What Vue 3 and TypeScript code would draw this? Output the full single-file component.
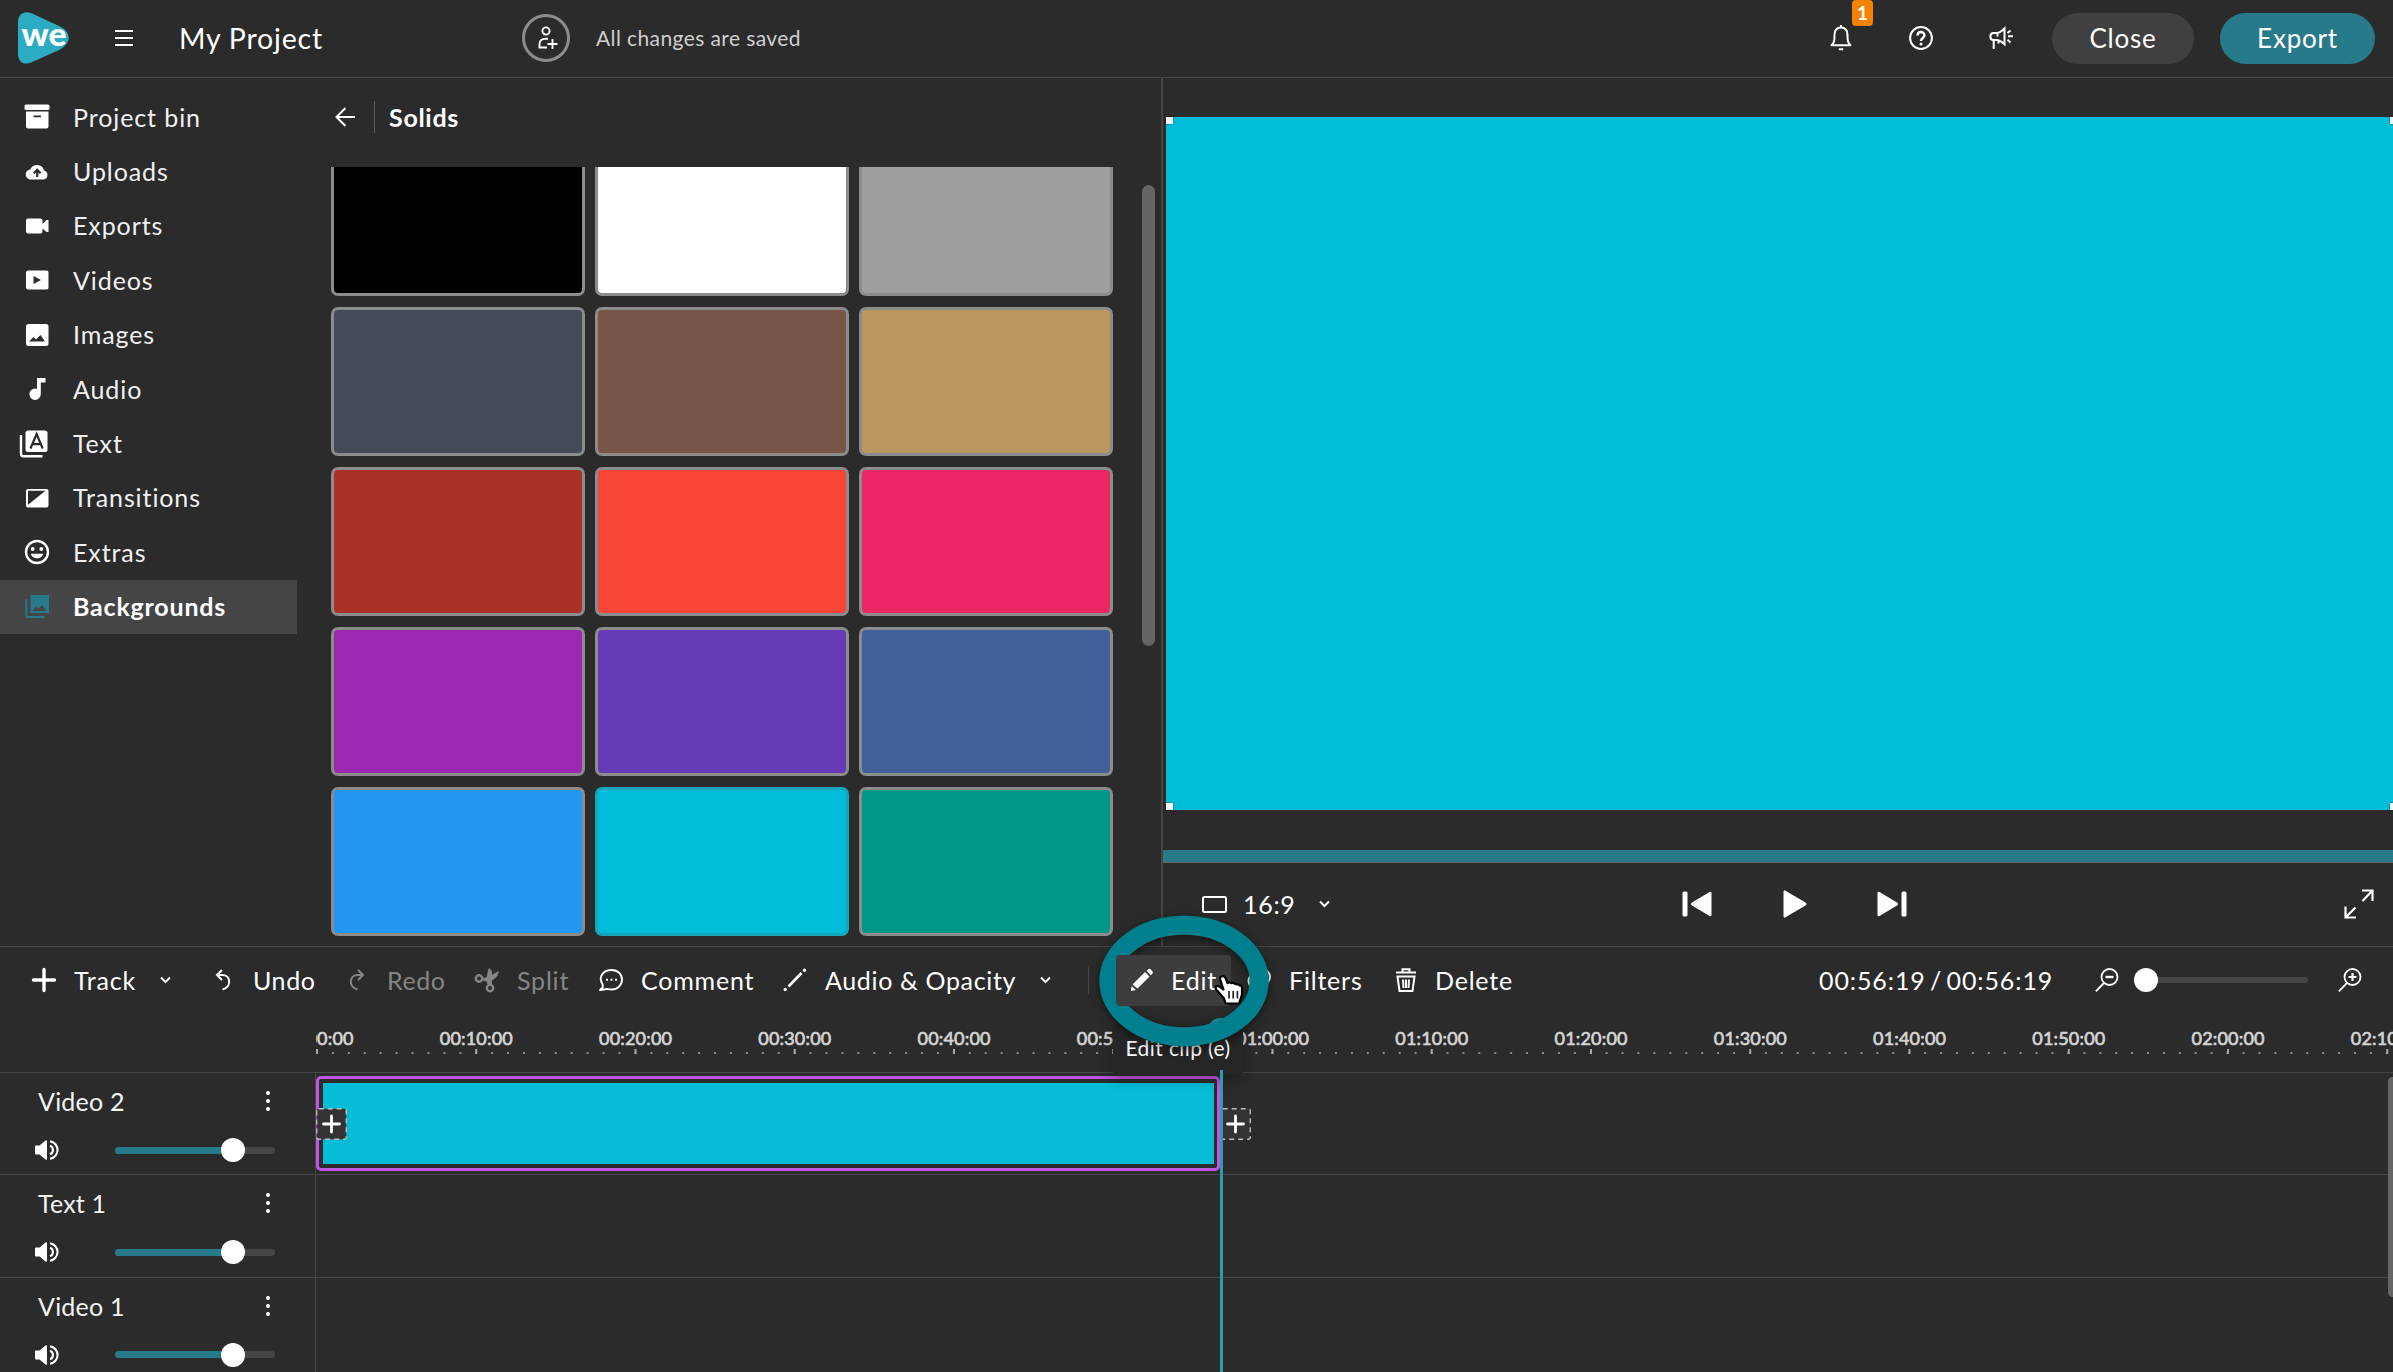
<script setup lang="ts">
import { ref } from 'vue'

interface NavItem { id: string; label: string }
interface Track { name: string; volume: number }

const nav: NavItem[] = [
  { id: 'bin', label: 'Project bin' },
  { id: 'uploads', label: 'Uploads' },
  { id: 'exports', label: 'Exports' },
  { id: 'videos', label: 'Videos' },
  { id: 'images', label: 'Images' },
  { id: 'audio', label: 'Audio' },
  { id: 'text', label: 'Text' },
  { id: 'transitions', label: 'Transitions' },
  { id: 'extras', label: 'Extras' },
  { id: 'backgrounds', label: 'Backgrounds' },
]
const active = ref('backgrounds')

const swatches = [
  '#000000', '#ffffff', '#9e9e9e',
  '#454a59', '#795548', '#ba9660',
  '#a93128', '#f84535', '#ea2664',
  '#9c27b0', '#673ab7', '#415f99',
  '#2196f3', '#00bcd9', '#009688',
]
const selectedSwatch = ref(13)

const tracks: Track[] = [
  { name: 'Video 2', volume: 74 },
  { name: 'Text 1', volume: 74 },
  { name: 'Video 1', volume: 74 },
]

const marks = Array.from({ length: 14 }, (_, i) => {
  const s = i * 10
  return `${String(Math.floor(s / 60)).padStart(2, '0')}:${String(s % 60).padStart(2, '0')}:00`
})
</script>

<template>
  <div class="app">
    <header class="header">
      <svg class="logo" viewBox="0 0 52 52">
        <path d="M0 10C0 2 6-1.500 13 1L41 14C54 20 54 31 41 38L13 50.500C6 53.500 0 50 0 42Z" fill="#2cacc3" />
        <text x="3.500" y="33.500" textLength="45" lengthAdjust="spacingAndGlyphs">we</text>
      </svg>
      <svg class="menu" viewBox="0 0 18 18"><path d="M0 2H18M0 9H18M0 16H18" stroke="#fff" stroke-width="2.200" /></svg>
      <h1 class="title">My Project</h1>
      <button class="invite">
        <svg width="20" height="24" viewBox="0 0 20 24" fill="none" stroke="#fff" stroke-width="1.900">
          <circle cx="8" cy="5" r="3.600" /><path d="M9 21.500H1.500V18C1.500 14.500 4 12.700 7.500 12.700H10M14.500 13V23M9.500 18H19.500" />
        </svg>
      </button>
      <span class="saved">All changes are saved</span>
      <div class="header-actions">
        <div class="bell">
          <svg width="22" height="26" viewBox="0 0 22 26" fill="none" stroke="#fff" stroke-width="2">
            <path d="M1.500 20.300C4.500 17.500 4.500 15 4.500 10C4.500 5 7 2.500 11 2.500S17.500 5 17.500 10C17.500 15 17.500 17.500 20.500 20.300Z" stroke-linejoin="round" />
            <path d="M11 0V2M8.800 24.300H13.200" />
          </svg>
          <span class="badge">1</span>
        </div>
        <svg class="help" width="24" height="24" viewBox="0 0 24 24" fill="none" stroke="#fff" stroke-width="2">
          <circle cx="12" cy="12" r="10.900" /><path d="M8.600 9.500C8.600 5 15.400 5 15.400 9.300C15.400 12 12 12 12 15" stroke-width="2.500" /><circle cx="12" cy="18" r="1.500" fill="#fff" stroke="none" />
        </svg>
        <svg class="horn" width="24" height="23" viewBox="0 0 24 23" fill="none" stroke="#fff" stroke-width="2">
          <path d="M15.500 1.500V17.200C12.500 14.500 10 13 7.500 13H4.500C0.300 13 0.300 6 4.500 6H7.500C10 6 12.500 4.500 15.500 1.500ZM4.700 13V22M9.500 13.500V16.500M8.500 6V9.500M18.500 6L21.500 3.500M19 9.300H24M18.500 12.800L21.500 15.500" />
        </svg>
        <button class="btn close">Close</button>
        <button class="btn export">Export</button>
      </div>
    </header>

    <main class="main">
      <nav class="nav">
        <a v-for="n in nav" :key="n.id" :class="['nav-item', { active: n.id === active }]">
          <svg class="nav-icon" viewBox="0 0 28 28">
            <g v-if="n.id === 'bin'"><rect x="1.500" y="1.500" width="25" height="5.500" rx="1.500" /><path fill-rule="evenodd" d="M3 8.500H25.500V23.500Q25.500 25.500 23.500 25.500H5Q3 25.500 3 23.500ZM10.500 12.500V14.200H18V12.500Z" /></g>
            <g v-else-if="n.id === 'uploads'"><path d="M8 21.500A5 5 0 0 1 7.300 11.500A7.200 7.200 0 0 1 21 12.500A4.600 4.600 0 0 1 20.500 21.500Z" /><path class="cut" d="M14.200 19V12.500M10.800 15.200L14.200 11.800L17.600 15.200" /></g>
            <path v-else-if="n.id === 'exports'" d="M5 6.500H17.500Q19.500 6.500 19.500 8.500V12L23.500 8H25.500V20H23.500L19.500 16.500V19.500Q19.500 21.500 17.500 21.500H5Q3 21.500 3 19.500V8.500Q3 6.500 5 6.500Z" />
            <path v-else-if="n.id === 'videos'" fill-rule="evenodd" d="M5 4.500H23.500Q25.500 4.500 25.500 6.500V21.500Q25.500 23.500 23.500 23.500H5Q3 23.500 3 21.500V6.500Q3 4.500 5 4.500ZM10.500 10V18L18 14Z" />
            <path v-else-if="n.id === 'images'" fill-rule="evenodd" d="M5.500 3H23Q25.500 3 25.500 5.500V22.500Q25.500 25 23 25H5.500Q3 25 3 22.500V5.500Q3 3 5.500 3ZM6 20.500H22L17.500 14L13 18.500L10.500 16Z" />
            <path v-else-if="n.id === 'audio'" d="M14 3H22.500V7.500H17.800V19A5.700 5.700 0 1 1 14 13.900Z" />
            <g v-else-if="n.id === 'text'"><rect x="2.500" y="0.500" width="22" height="21.500" rx="2.500" /><path class="line" d="M-2 5V24Q-2 26.200 0.200 26.200H19.500" /><path class="cut" d="M7.500 18.500L13.600 4L19.700 18.500M9.500 14.200H17.700" /></g>
            <path v-else-if="n.id === 'transitions'" fill-rule="evenodd" d="M5 5H23.500Q25.500 5 25.500 7V21.500Q25.500 23.500 23.500 23.500H5Q3 23.500 3 21.500V7Q3 5 5 5ZM5 6.700V20.800L22.500 6.700Z" />
            <g v-else-if="n.id === 'extras'"><circle class="line" cx="14" cy="14" r="11" /><circle cx="9.700" cy="11" r="1.900" /><circle cx="18.300" cy="11" r="1.900" /><path d="M7.800 15.800H20.200C19 22 9 22 7.800 15.800Z" /></g>
            <g v-else><path fill-rule="evenodd" d="M7.500 2H26V20H7.500ZM9.500 18H23.500L19 12L15.500 15.800L13 13.800Z" /><path class="line" d="M3.300 6V22.500Q3.300 24 4.800 24H21.500" /></g>
          </svg>
          <span>{{ n.label }}</span>
        </a>
      </nav>

      <section class="library">
        <div class="library-head">
          <svg width="20" height="20" viewBox="0 0 20 20" fill="none" stroke="#fff" stroke-width="2"><path d="M20 10H1.500M10.500 1L1.500 10L10.500 19" /></svg>
          <i></i>
          <h2>Solids</h2>
        </div>
        <div class="library-body">
          <div class="swatch-scroll">
            <div class="swatches">
              <div v-for="(c, i) in swatches" :key="c" :class="['swatch', { selected: i === selectedSwatch }]" :style="{ backgroundColor: c }"></div>
            </div>
          </div>
          <div class="scrollbar"></div>
        </div>
      </section>

      <section class="preview">
        <div class="canvas">
          <b class="handle tl"></b><b class="handle tr"></b><b class="handle bl"></b><b class="handle br"></b>
        </div>
        <div class="progress"></div>
        <div class="controls">
          <div class="ratio">
            <svg width="25" height="17" viewBox="0 0 25 17"><rect x="1" y="1" width="23" height="15" rx="1.500" fill="none" stroke="#fff" stroke-width="2" /></svg>
            <span>16:9</span>
            <svg class="chev" width="11" height="8" viewBox="0 0 11 8"><path d="M1 1.500L5.500 6L10 1.500" /></svg>
          </div>
          <div class="transport">
            <svg width="30" height="26" viewBox="0 0 30 26" fill="#fff"><rect x="0.500" y="0.500" width="5" height="25" rx="1.500" /><path d="M29.500 2V24Q29.500 26 27.500 25L10 14.500Q8 13 10 11.500L27.500 1Q29.500 0 29.500 2Z" /></svg>
            <svg width="24" height="28" viewBox="0 0 24 28" fill="#fff"><path d="M0.500 2Q0.500-0.500 2.500 0.700L22.500 12.500Q24.500 14 22.500 15.500L2.500 27.300Q0.500 28.500 0.500 26Z" /></svg>
            <svg width="30" height="26" viewBox="0 0 30 26" fill="#fff"><rect x="24.500" y="0.500" width="5" height="25" rx="1.500" /><path d="M0.500 2V24Q0.500 26 2.500 25L20 14.500Q22 13 20 11.500L2.500 1Q0.500 0 0.500 2Z" /></svg>
          </div>
          <svg class="expand" width="30" height="30" viewBox="0 0 30 30" fill="none" stroke="#fff" stroke-width="2.200"><path d="M18 1.500H28.500V12M28.500 1.500L18.500 12M1.500 17.500V28.500H12M1.500 28.500L11.500 18.500" /></svg>
        </div>
      </section>
    </main>

    <section class="toolbar">
      <div class="tool t-track">
        <svg width="24" height="24" viewBox="0 0 24 24"><path d="M12 1.500V22.500M1.500 12H22.500" stroke="#fff" stroke-width="3.400" stroke-linecap="round" /></svg>
        <span>Track</span>
        <svg class="chev" width="11" height="8" viewBox="0 0 11 8"><path d="M1 1.500L5.500 6L10 1.500" /></svg>
      </div>
      <div class="tool t-undo">
        <svg width="24" height="24" viewBox="0 0 24 24" fill="none" stroke="#fff" stroke-width="2"><path d="M11 2L6 7L11 12M6.500 7H11C20 7 21 18.500 11.500 21.500" /></svg>
        <span>Undo</span>
      </div>
      <div class="tool t-redo off">
        <svg width="24" height="24" viewBox="0 0 24 24" fill="none" stroke="#868686" stroke-width="2"><path d="M13 2L18 7L13 12M17.500 7H13C4 7 3 18.500 12.500 21.500" /></svg>
        <span>Redo</span>
      </div>
      <div class="tool t-split off">
        <svg width="24" height="24" viewBox="0 0 24 24" fill="none" stroke="#868686" stroke-width="2.400"><circle cx="4" cy="10.500" r="3.200" /><circle cx="15" cy="20" r="3.200" /><path d="M7 10.500L13 9.500L23.500 3.500C22.500 8 20 11 15 13L9.500 13ZM12.500 16L12 9L14 0.500L16.500 3V16Z" fill="#868686" stroke-width="0.800" /></svg>
        <span>Split</span>
      </div>
      <div class="tool t-comment">
        <svg width="24" height="22" viewBox="0 0 24 22" fill="none" stroke="#fff" stroke-width="1.900"><path d="M3.600 15.500C-1.500 7 5 1 12.500 1C19 1 23 5.500 23 10.500C23 16 18.500 20.500 12.500 20.500C9 20.500 8 19.500 6.500 20.200L1 21L3.800 18.300Z" stroke-linejoin="round" /><path d="M7 10.800H9M11.500 10.800H13.500M16 10.800H18" /></svg>
        <span>Comment</span>
      </div>
      <div class="tool t-audio">
        <svg width="24" height="24" viewBox="0 0 24 24"><path d="M5.500 18.500L18.500 5" stroke="#fff" stroke-width="2.600" /><circle cx="2.200" cy="21.500" r="1.700" fill="#fff" /><circle cx="21.500" cy="2.200" r="1.700" fill="#fff" /></svg>
        <span>Audio &amp; Opacity</span>
        <svg class="chev" width="11" height="8" viewBox="0 0 11 8"><path d="M1 1.500L5.500 6L10 1.500" /></svg>
      </div>
      <i class="sep"></i>
      <div class="tool t-edit">
        <svg width="24" height="24" viewBox="0 0 24 24" fill="#fff"><path d="M2.500 16.500L15 4L19.500 8.500L7.500 20.500ZM1.700 18L6 22L0.800 23ZM16.500 2.800L18.500 1Q19.500 0.500 20.500 1.300L22.500 3.500Q23.300 4.500 22.500 5.500L20.800 7.200Z" /></svg>
        <span>Edit</span>
        <svg class="cursor" width="30" height="33" viewBox="0 0 30 33"><path d="M7.500 2.500Q5.500 3 6.200 5.500L9.500 15.500L5.500 12.500Q2 11 1.500 14Q2 16 4 17.500L10 24.500L11.500 29.500H25L28 20.500V13.500Q27.500 11 25.500 11.500Q24 9.500 21.500 10.200Q20 8.300 17.500 9.200Q16 7.500 13.500 9L11.500 4Q10 1.500 7.500 2.500Z" fill="#fff" stroke="#000" stroke-width="2.200" stroke-linejoin="round" /><path d="M15 17V24.500M19.200 17V24.500M23.400 17V24.500" stroke="#222" stroke-width="1.700" /></svg>
      </div>
      <div class="tool t-filters">
        <svg width="24" height="24" viewBox="0 0 24 24" fill="none" stroke="#fff" stroke-width="2"><circle cx="15.500" cy="9" r="7.500" /><circle cx="8.500" cy="13" r="7" /></svg>
        <span>Filters</span>
      </div>
      <div class="tool t-delete">
        <svg width="24" height="24" viewBox="0 0 24 24" fill="none" stroke="#fff" stroke-width="2"><path d="M3 4.500H23M9.500 4V1.200H16.500V4M4.500 8.500H21.500L19.500 23H6.500ZM10 11.500L10.500 20M13 11.500V20M16 11.500L15.500 20" /></svg>
        <span>Delete</span>
      </div>
      <div class="zoombar">
        <span class="time">00:56:19 / 00:56:19</span>
        <svg width="24" height="24" viewBox="0 0 24 24" fill="none" stroke="#fff" stroke-width="1.800"><circle cx="14.500" cy="9" r="8" /><path d="M9 15L0.800 23.300" /><path d="M10.500 9H18.500" stroke-width="2.400" /></svg>
        <div class="zoom-slider"><b></b></div>
        <svg width="24" height="24" viewBox="0 0 24 24" fill="none" stroke="#fff" stroke-width="1.800"><circle cx="14.500" cy="9" r="8" /><path d="M9 15L0.800 23.300" /><path d="M10.500 9H18.500M14.500 5V13" stroke-width="2.200" /></svg>
      </div>
      <svg class="ring" width="190" height="156" viewBox="0 0 190 156"><ellipse cx="95" cy="73" rx="75.200" ry="55.700" fill="none" stroke="#00808f" stroke-width="19" /></svg>
    </section>

    <section class="ruler">
      <div class="ruler-view">
        <div class="marks"><span v-for="m in marks" :key="m">{{ m }}</span></div>
        <div class="ticks"></div>
      </div>
      <b class="playhead-knob"></b>
      <div class="tooltip">Edit clip (e)</div>
    </section>

    <section class="tracks">
      <div v-for="(t, i) in tracks" :key="t.name" class="track">
        <div class="track-head">
          <div class="track-name">
            <span>{{ t.name }}</span>
            <svg width="4" height="20" viewBox="0 0 4 20" fill="#fff"><circle cx="2" cy="2" r="2" /><circle cx="2" cy="10" r="2" /><circle cx="2" cy="18" r="2" /></svg>
          </div>
          <div class="track-volume">
            <svg width="25" height="20" viewBox="0 0 25 20"><path d="M1 5.500H4.500L10.500 0.500Q12 0 12 1V19Q12 20 10.500 19.500L4.500 14.500H1Q0 14.500 0 13.500V6.500Q0 5.500 1 5.500Z" fill="#fff" /><path d="M15 5.700A4.600 4.600 0 0 1 15 14.300M15 1.200A8.900 8.900 0 0 1 15 18.800" fill="none" stroke="#fff" stroke-width="2.100" /></svg>
            <div class="slider"><div class="fill" :style="{ width: t.volume + '%' }"></div><b></b></div>
          </div>
        </div>
        <div class="lane">
          <template v-if="i === 0">
            <div class="clip"><div></div></div>
            <svg v-for="side in ['start', 'end']" :key="side" :class="['add', side]" width="31" height="32" viewBox="0 0 31 32">
              <rect x="0.700" y="0.700" width="29.600" height="30.600" rx="2" /><path d="M15.500 8V24M7.500 16H23.500" />
            </svg>
          </template>
        </div>
      </div>
      <div class="playhead"></div>
      <div class="tracks-scroll"></div>
    </section>
  </div>
</template>

<style>
html, body { margin: 0; background: #2b2b2b; overflow: hidden; }
</style>

<style scoped>
.app { width: 100vw; height: 100vh; overflow: hidden; display: flex; flex-direction: column; background: #2b2b2b; color: #fff; font: 400 25px/30px Lato, sans-serif; letter-spacing: 0.9px; font-variant-ligatures: none; }
.app * { box-sizing: border-box; }
svg { display: block; flex: none; overflow: visible; }
h1, h2 { margin: 0; font-weight: 400; }
button { border: 0; padding: 0; margin: 0; color: inherit; font: inherit; }

.header { height: 78px; flex: none; border-bottom: 1px solid #464646; display: flex; align-items: center; padding: 0 18px 1px 18px; white-space: nowrap; }
.logo { width: 52px; height: 52px; }
.logo text { font: 900 33px Lato, sans-serif; fill: #fff; letter-spacing: 0; }
.menu { width: 18px; height: 18px; margin-left: 45px; }
.title { font-size: 28.500px; line-height: 36px; letter-spacing: 0.8px; margin-left: 46px; width: 343px; }
.invite { width: 48px; height: 48px; border-radius: 50%; border: 3px solid #8c8c8c; background: none; display: flex; align-items: center; justify-content: center; padding-left: 3px; }
.saved { font-size: 21px; letter-spacing: 0.4px; color: #cfcfcf; margin-left: 26px; }
.header-actions { margin-left: auto; display: flex; align-items: center; }
.bell { position: relative; }
.badge { position: absolute; left: 22px; top: -25px; width: 21px; height: 26px; border-radius: 4px; background: #f58300; font: 700 19px/26px Lato, sans-serif; text-align: center; letter-spacing: 0; }
.help { margin-left: 57px; }
.horn { margin-left: 56px; margin-right: 39px; }
.btn { height: 51px; border-radius: 26px; font-size: 26px; letter-spacing: 0.8px; }
.close { width: 142px; background: #404040; margin-right: 26px; }
.export { width: 155px; background: #277a89; }

.main { height: 869px; flex: none; display: flex; border-bottom: 1px solid #464646; }
.nav { width: 297px; padding-top: 12px; flex: none; }
.nav-item { height: 54.400px; display: flex; align-items: center; padding-left: 22.500px; gap: 22.500px; color: #f1f1f1; }
.nav-item span { margin-top: -1px; }
.nav-icon { width: 28px; height: 28px; fill: #fff; }
.nav-icon .cut { fill: none; stroke: #2b2b2b; stroke-width: 2.200; }
.nav-icon .line { fill: none; stroke: #fff; stroke-width: 2.400; }
.nav-item.active { background: #454545; color: #fff; font-weight: 700; letter-spacing: 0.8px; }
.active .nav-icon { fill: #277a89; }
.active .nav-icon .line { stroke: #277a89; stroke-width: 2; }

.library { width: 866px; flex: none; border-right: 2px solid #464646; padding-left: 34px; display: flex; flex-direction: column; }
.library-head { height: 89px; padding: 0 0 12px 4px; display: flex; align-items: center; }
.library-head i { width: 1px; height: 32px; background: #5a5a5a; margin: 0 14px 0 19px; }
.library-head h2 { font-weight: 700; font-size: 25px; letter-spacing: 0.7px; padding-top: 1px; }
.library-body { display: flex; height: 770px; }
.swatch-scroll { width: 782px; height: 769px; overflow: hidden; flex: none; }
.swatches { display: grid; grid-template-columns: repeat(3, 254px); grid-auto-rows: 149px; gap: 11px 10px; margin-top: -20px; }
.swatch { border: 3px solid #8c8c8c; border-radius: 7px; }
.swatch.selected { border-color: #17a5bb; }
.scrollbar { width: 13px; height: 461px; border-radius: 7px; background: #656565; margin: 18px 0 0 29px; }

.preview { flex: 1; min-width: 0; display: flex; flex-direction: column; padding-top: 39px; }
.canvas { position: relative; height: 693px; margin-left: 3px; background: #00bcd9; }
.handle { position: absolute; width: 7px; height: 7px; background: #fff; box-shadow: 0 0 2px rgba(0, 0, 0, 0.6); }
.tl { left: 0; top: 0; } .tr { right: -4px; top: 0; } .bl { left: 0; bottom: 0; } .br { right: -4px; bottom: 0; }
.progress { height: 13px; margin-top: 40px; background: #277a89; border-bottom: 1px solid #626262; }
.controls { flex: 1; display: flex; align-items: center; position: relative; padding: 0 19px 1px 39px; }
.ratio { display: flex; align-items: center; width: 480px; letter-spacing: 0.7px; }
.ratio span { width: 76px; margin-left: 16px; }
.chev { fill: none; stroke: #fff; stroke-width: 2; }
.transport { display: flex; align-items: center; gap: 70.500px; }
.expand { margin-left: auto; }

.toolbar { height: 68px; flex: none; display: flex; align-items: center; position: relative; z-index: 5; padding: 0 31px 2px 32px; white-space: nowrap; }
.tool { display: flex; align-items: center; gap: 18px; flex: none; position: relative; z-index: -2; }
.tool .chev { margin-left: 6px; }
.tool span { letter-spacing: 0.8px; }
.off { color: #868686; }
.t-track { width: 179px; } .t-undo { width: 134px; } .t-redo { width: 130px; } .t-split { width: 124px; }
.t-undo span, .t-redo span { letter-spacing: 0.6px; }
.t-comment { width: 184px; } .t-audio { width: 305px; }
.tool.t-audio span { letter-spacing: 0.650px; }
.sep { width: 1px; height: 27px; background: #464646; margin-right: 24px; }
.tool.t-edit { z-index: 0; width: 118px; height: 51px; padding-left: 17px; margin-right: 16px; }
.t-edit span { margin-left: -1px; }
.t-edit::before { content: ''; position: absolute; inset: 0 0 0 3px; background: #3d3d3d; border-radius: 4px; z-index: -3; }
.t-filters { width: 146px; }
.cursor { position: absolute; left: 101px; top: 19px; z-index: 3; }
.ring { position: absolute; left: 1089px; top: -39px; filter: drop-shadow(0 3px 5px rgba(0, 0, 0, 0.5)); z-index: -1; }
.zoombar { margin-left: auto; display: flex; align-items: center; }
.time { word-spacing: -3px; width: 276px; }
.zoom-slider { width: 174px; height: 6px; border-radius: 3px; background: #464646; margin: 0 30px 0 15px; display: flex; align-items: center; }
.zoom-slider b { width: 24px; height: 24px; border-radius: 50%; background: #fff; flex: none; }

.ruler { height: 58px; flex: none; position: relative; border-bottom: 1px solid #464646; padding-left: 316px; z-index: 3; }
.ruler-view { overflow: hidden; height: 50px; }
.marks { display: flex; margin-left: -78.500px; padding-top: 12px; width: 2300px; }
.marks span { width: 159.250px; flex: none; text-align: center; font-size: 18px; line-height: 22px; letter-spacing: 0.200px; color: #d4d4d4; -webkit-text-stroke: 0.700px #d4d4d4; }
.ticks { height: 5px; background: linear-gradient(90deg, #aaa 2px, transparent 2px) 0 0 / 159.250px 5px repeat-x, linear-gradient(90deg, #8a8a8a 2px, transparent 2px) 0 100% / 15.925px 2px repeat-x; }
.playhead-knob { position: absolute; left: 1207px; top: 3px; width: 28px; height: 28px; border-radius: 50%; background: #2f9cab; }
.tooltip { position: absolute; left: 1113px; top: 10px; width: 130px; height: 50px; border-radius: 4px; background: #262626; box-shadow: 0 4px 14px rgba(0, 0, 0, 0.3); font-size: 21px; line-height: 45px; letter-spacing: 0.400px; text-align: center; white-space: nowrap; }

.tracks { flex: 1; position: relative; min-height: 0; }
.track { height: 102.700px; display: flex; border-bottom: 1px solid #464646; letter-spacing: 0.200px; }
.track:first-child { height: 102px; }
.track-head { width: 316px; flex: none; border-right: 1px solid #464646; }
.track-name { display: flex; justify-content: space-between; padding: 13px 45px 0 38px; align-items: center; color: #f4f4f4; }
.track-volume { display: flex; align-items: center; padding: 24px 0 0 35px; }
.slider { width: 160px; height: 7px; border-radius: 4px; background: #464646; margin-left: 55px; display: flex; align-items: center; }
.slider .fill { height: 7px; background: #277a89; border-radius: 4px; flex: none; }
.slider b { width: 24px; height: 24px; border-radius: 50%; background: #fff; margin-left: -12px; flex: none; }
.lane { position: relative; flex: 1; padding-top: 3px; }
.clip { width: 904px; height: 95px; border: 3px solid #bf55e4; border-radius: 5px; padding: 4px 3px 4px 4px; }
.clip div { height: 100%; background: #06bcd6; }
.add { position: absolute; top: 35px; }
.add rect { fill: #333; stroke: #bdbdbd; stroke-width: 1.400; stroke-dasharray: 5 4; }
.add path { stroke: #fff; stroke-width: 2.800; stroke-linecap: round; }
.start { left: 0; } .end { left: 904px; }
.playhead { position: absolute; left: 1220px; top: -3px; bottom: 0; width: 3px; background: #2f9cab; z-index: 4; }
.tracks-scroll { position: absolute; left: 2388px; top: 4px; width: 9px; height: 220px; border-radius: 5px; background: #656565; }
</style>
